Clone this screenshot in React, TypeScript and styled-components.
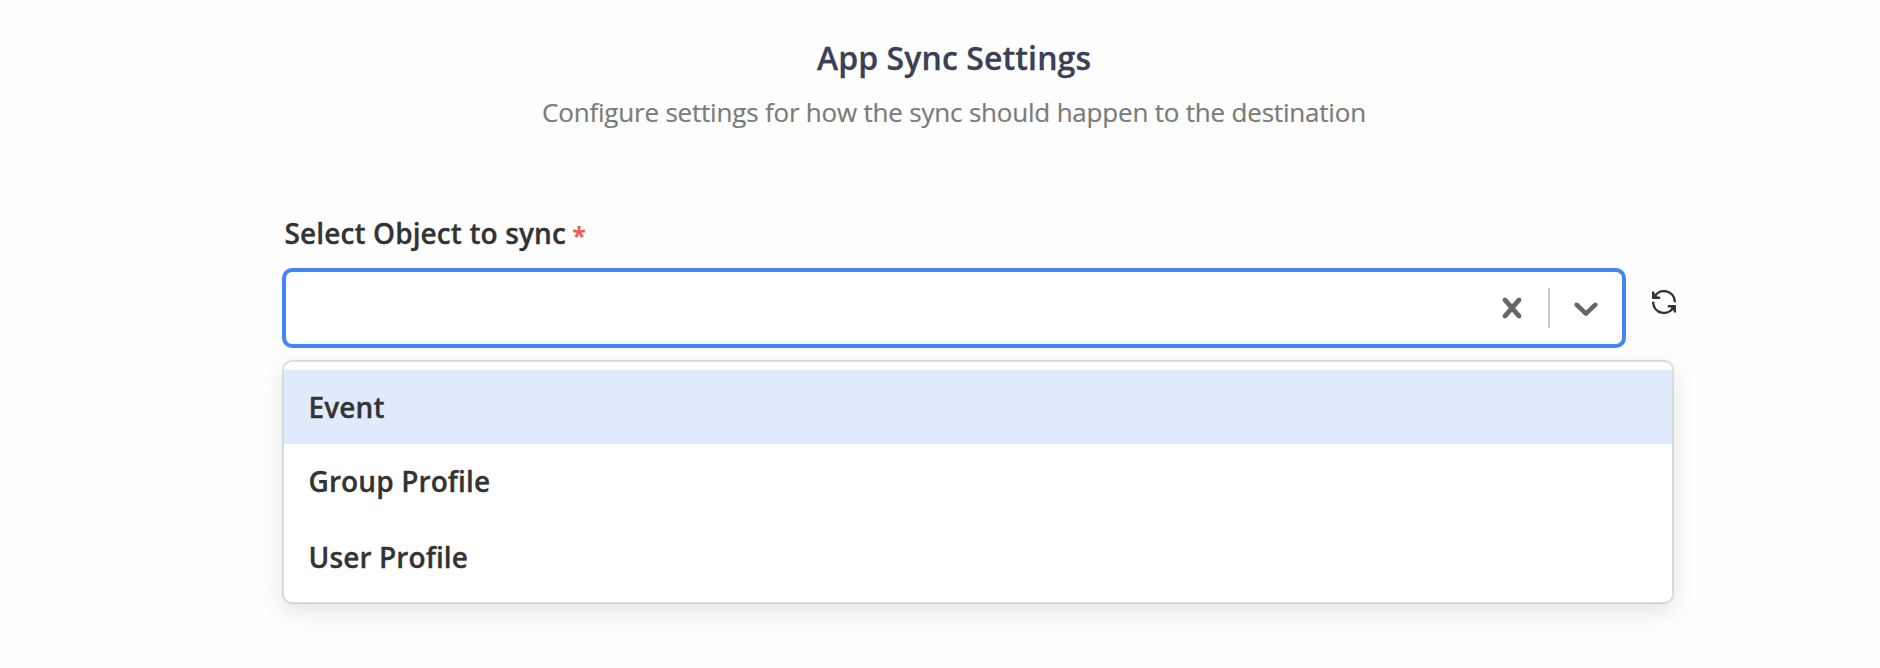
import React from "react";
import styled, { createGlobalStyle } from "styled-components";

const GlobalStyle = createGlobalStyle`
  *, *::before, *::after { box-sizing: border-box; }
  body {
    margin: 0;
    background: #fefefe;
    font-family: "Open Sans", sans-serif;
    color: #333;
  }
`;

const Page = styled.main`
  width: 1880px;
  height: 668px;
  padding: 36px 204px 0 282px;
  overflow: hidden;
`;

const Header = styled.header`
  width: 1344px;
  text-align: center;
`;

const Title = styled.h1`
  margin: 0;
  font-size: 32px;
  font-weight: 600;
  line-height: 44px;
  letter-spacing: 0.1px;
  color: #3a4055;
  -webkit-text-stroke: 0.3px currentColor;
`;

const Subtitle = styled.p`
  margin: 14px 0 0;
  font-size: 26px;
  line-height: 36px;
  letter-spacing: -0.2px;
  color: #7b7b7b;
  -webkit-text-stroke: 0.2px currentColor;
`;

const Label = styled.label`
  display: block;
  height: 38px;
  margin-top: 84px;
  padding-left: 2.5px;
  font-size: 28px;
  font-weight: 600;
  line-height: 38px;
  letter-spacing: 0.11px;
  -webkit-text-stroke: 0.3px currentColor;
`;

const Required = styled.span`
  display: inline-block;
  margin: 2px 0 0 -1px;
  line-height: 38px;
  vertical-align: top;
  color: #eb5c4b;
  font-size: 25px;
  font-weight: 700;
  -webkit-text-stroke: 0;
`;

const Field = styled.div`
  display: flex;
  margin-top: 16px;
`;

const Control = styled.div`
  display: flex;
  flex: none;
  width: 1344px;
  height: 80px;
  border: 4px solid #4285f8;
  border-radius: 10px;
  background: #fff;
`;

const Value = styled.div`
  flex: 1;
`;

const Indicator = styled.button`
  display: flex;
  width: 72px;
  padding: 16px;
  border: 0;
  background: none;
  color: #666;

  svg {
    width: 40px;
    height: 40px;
    fill: currentColor;
  }
`;

const Separator = styled.span`
  width: 2px;
  margin: 16px 0;
  background: #ccc;
`;

const Refresh = styled.button`
  flex: none;
  width: 24px;
  height: 24px;
  margin: 22px 0 0 26px;
  padding: 0;
  border: 0;
  background: none;
  color: #333;

  svg { display: block; }
`;

const Menu = styled.ul`
  width: 1392px;
  height: 244px;
  margin: 12px 0 0;
  padding: 8px 0;
  list-style: none;
  border: 2px solid rgba(0, 0, 0, 0.12);
  border-radius: 10px;
  background: #fff;
  background-clip: padding-box;
  box-shadow: 0 8px 22px rgba(0, 0, 0, 0.1);
`;

const Option = styled.li<{ $focused?: boolean }>`
  height: 74px;
  padding: 18px 24.5px;
  font-size: 28px;
  font-weight: 600;
  line-height: 38px;
  letter-spacing: 0.11px;
  background: ${({ $focused }) => ($focused ? "#dfeafd" : "transparent")};
  -webkit-text-stroke: 0.3px currentColor;

  &:last-child { margin-top: 2px; }
`;

const options = ["Event", "Group Profile", "User Profile"];

export default function App() {
  return (
    <>
      <GlobalStyle />
      <Page>
        <Header>
          <Title>App Sync Settings</Title>
          <Subtitle>Configure settings for how the sync should happen to the destination</Subtitle>
        </Header>
        <Label>
          Select Object to sync <Required>*</Required>
        </Label>
        <Field>
          <Control>
            <Value />
            <Indicator aria-label="Clear">
              <svg viewBox="0 0 20 20">
                <path d="M14.348 14.849c-0.469 0.469-1.229 0.469-1.697 0l-2.651-3.030-2.651 3.029c-0.469 0.469-1.229 0.469-1.697 0-0.469-0.469-0.469-1.229 0-1.697l2.758-3.15-2.759-3.152c-0.469-0.469-0.469-1.228 0-1.697s1.228-0.469 1.697 0l2.652 3.031 2.651-3.031c0.469-0.469 1.228-0.469 1.697 0s0.469 1.229 0 1.697l-2.758 3.152 2.758 3.15c0.469 0.469 0.469 1.229 0 1.698z" />
              </svg>
            </Indicator>
            <Separator />
            <Indicator aria-label="Open options">
              <svg viewBox="0 0 20 20">
                <path d="M4.516 7.548c0.436-0.446 1.043-0.481 1.576 0l3.908 3.747 3.908-3.747c0.533-0.481 1.141-0.446 1.574 0 0.436 0.445 0.408 1.197 0 1.615-0.406 0.418-4.695 4.502-4.695 4.502-0.217 0.223-0.502 0.335-0.787 0.335s-0.57-0.112-0.789-0.335c0 0-4.287-4.084-4.695-4.502s-0.436-1.17 0-1.615z" />
              </svg>
            </Indicator>
          </Control>
          <Refresh aria-label="Refresh">
            <svg width="24" height="24" viewBox="0 0 24 24">
              <g fill="none" stroke="currentColor" strokeWidth="2.4" strokeLinecap="round">
                <path d="M2.6 6.6A10.8 10.8 0 0 1 22.8 11.2" />
                <path d="M21.4 17.4A10.8 10.8 0 0 1 1.2 12.8" />
              </g>
              <path d="M0 2.3a1.1 1.1 0 0 1 2.2 0L3 4.2 5.2 6.6H7.1a1.2 1.2 0 0 1 0 2.5H.9A.9.9 0 0 1 0 8.2z" fill="currentColor" />
              <path d="M24 21.7a1.1 1.1 0 0 1-2.2 0L21 19.8 18.8 17.4H16.9a1.2 1.2 0 0 1 0-2.5H23.1a.9.9 0 0 1 .9.9z" fill="currentColor" />
            </svg>
          </Refresh>
        </Field>
        <Menu>
          {options.map((option, index) => (
            <Option key={option} $focused={index === 0}>
              {option}
            </Option>
          ))}
        </Menu>
      </Page>
    </>
  );
}
